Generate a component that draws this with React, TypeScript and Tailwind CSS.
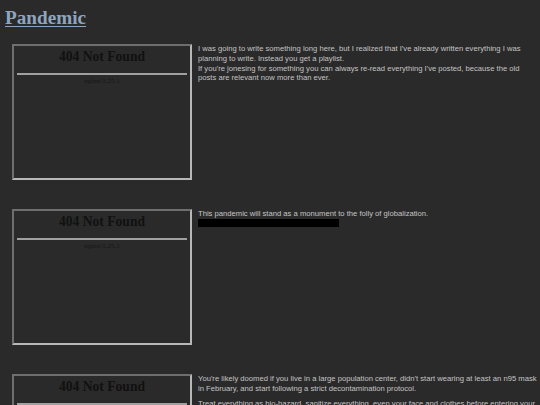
const posts = [
  {
    paras: [
      [
        "I was going to write something long here, but I realized that I've already written everything I was planning to write. Instead you get a playlist.",
        "If you're jonesing for something you can always re-read everything I've posted, because the old posts are relevant now more than ever.",
      ],
    ],
  },
  {
    paras: [["This pandemic will stand as a monument to the folly of globalization."]],
    bar: true,
  },
  {
    paras: [
      [
        "You're likely doomed if you live in a large population center, didn't start wearing at least an n95 mask in February, and start following a strict decontamination protocol.",
      ],
      [
        "Treat everything as bio-hazard, sanitize everything, even your face and clothes before entering your home.",
      ],
    ],
  },
]

function NotFoundFrame() {
  return (
    <div className="box-border h-[136px] w-[180px] shrink-0 border-2 border-t-[#6e6e6e] border-l-[#6e6e6e] border-b-[#b8b8b8] border-r-[#b8b8b8] px-[3px] text-center font-['Liberation_Serif',serif] text-[#111111]">
      <div className="mt-[1px] text-[13.6px] font-bold leading-[20px]">404 Not Found</div>
      <div className="mt-[6px] h-[2px] bg-[#a0a0a0]" />
      <div className="mt-[1px] text-[7px] leading-[10px] text-[#161616]">nginx/1.25.1</div>
    </div>
  )
}

export default function App() {
  return (
    <div className="min-h-[405px] overflow-hidden bg-[#2a2a2a] pl-[5px] pr-[2px] pt-[6px] font-['Liberation_Sans',Arial,sans-serif]">
      <h1 className="font-['Liberation_Serif',serif] text-[19.2px] font-bold leading-[24px] text-[#8ea5bf] underline decoration-[#8ea5bf] decoration-1 underline-offset-[2px]">
        Pandemic
      </h1>

      <div className="mt-[14px] flex flex-col gap-[29px]">
        {posts.map((post, i) => (
          <div key={i} className="flex gap-[6px] pl-[7px]">
            <NotFoundFrame />
            <div className="text-[7.65px] leading-[9.8px] text-[#c4c4c4]">
              {post.paras.map((lines, j) => (
                <p key={j} className={j > 0 ? 'mt-[5px]' : ''}>
                  {lines.map((l, k) => (
                    <span key={k} className="block">
                      {l}
                    </span>
                  ))}
                </p>
              ))}
              {post.bar && <div className="h-[8px] w-[141px] bg-black" />}
            </div>
          </div>
        ))}
      </div>
    </div>
  )
}
